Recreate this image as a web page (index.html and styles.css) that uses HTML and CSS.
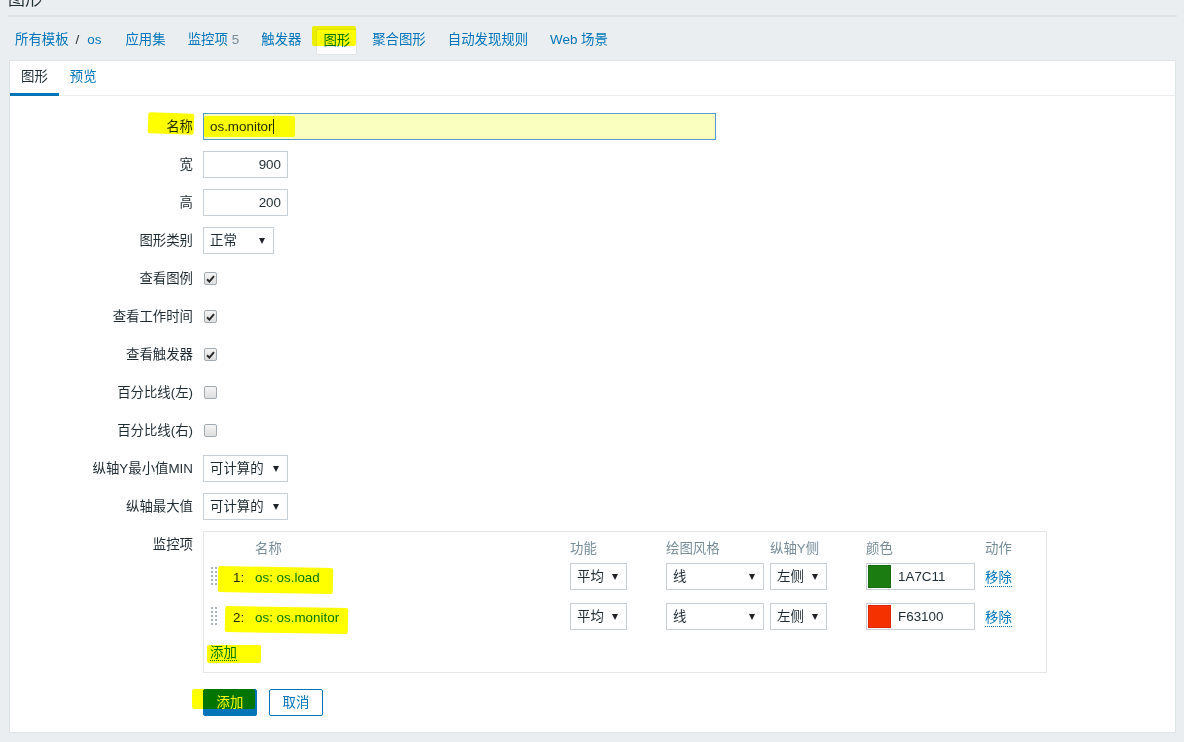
FILE: index.html
```html
<!DOCTYPE html>
<html lang="zh-CN">
<head>
<meta charset="utf-8">
<title>图形</title>
<link rel="stylesheet" href="styles.css">
</head>
<body>
<div class="page">
  <header class="header"><h1 class="title">图形</h1></header>
  <nav class="nav">
    <ul class="nav-list">
      <li class="nav-item"><a class="link">所有模板</a><span class="sep">/</span><a class="link">os</a></li>
      <li class="nav-item"><a class="link">应用集</a></li>
      <li class="nav-item"><a class="link">监控项</a><span class="count">5</span></li>
      <li class="nav-item"><a class="link">触发器</a></li>
      <li class="nav-item active"><span class="link">图形</span></li>
      <li class="nav-item"><a class="link">聚合图形</a></li>
      <li class="nav-item"><a class="link">自动发现规则</a></li>
      <li class="nav-item"><a class="link">Web 场景</a></li>
    </ul>
  </nav>
  <main class="panel">
    <ul class="tabs">
      <li class="tab active">图形</li>
      <li class="tab">预览</li>
    </ul>
    <div class="form">
      <div class="label">名称</div>
      <div class="field"><div class="input input-name">os.monitor<span class="caret"></span></div></div>

      <div class="label">宽</div>
      <div class="field"><div class="input input-num">900</div></div>

      <div class="label">高</div>
      <div class="field"><div class="input input-num">200</div></div>

      <div class="label">图形类别</div>
      <div class="field"><div class="select select-type"><span>正常</span><span class="arrow"></span></div></div>

      <div class="label">查看图例</div>
      <div class="field"><span class="check checked"><svg width="9" height="8" viewBox="0 0 9 8"><path d="M1 4.2 L3.4 6.6 L8 1.2" fill="none" stroke="#2b2b2b" stroke-width="2"/></svg></span></div>

      <div class="label">查看工作时间</div>
      <div class="field"><span class="check checked"><svg width="9" height="8" viewBox="0 0 9 8"><path d="M1 4.2 L3.4 6.6 L8 1.2" fill="none" stroke="#2b2b2b" stroke-width="2"/></svg></span></div>

      <div class="label">查看触发器</div>
      <div class="field"><span class="check checked"><svg width="9" height="8" viewBox="0 0 9 8"><path d="M1 4.2 L3.4 6.6 L8 1.2" fill="none" stroke="#2b2b2b" stroke-width="2"/></svg></span></div>

      <div class="label">百分比线(左)</div>
      <div class="field"><span class="check"></span></div>

      <div class="label">百分比线(右)</div>
      <div class="field"><span class="check"></span></div>

      <div class="label">纵轴Y最小值MIN</div>
      <div class="field"><div class="select select-axis"><span>可计算的</span><span class="arrow"></span></div></div>

      <div class="label">纵轴最大值</div>
      <div class="field"><div class="select select-axis"><span>可计算的</span><span class="arrow"></span></div></div>

      <div class="label">监控项</div>
      <div class="field">
        <div class="items">
          <div class="irow ihead">
            <span></span><span></span>
            <span>名称</span><span>功能</span><span>绘图风格</span><span>纵轴Y侧</span><span>颜色</span><span>动作</span>
          </div>
          <div class="irow item first">
            <span class="handle"></span>
            <span class="num">1:</span>
            <a class="link name">os: os.load</a>
            <div class="select select-func"><span>平均</span><span class="arrow"></span></div>
            <div class="select select-style"><span>线</span><span class="arrow"></span></div>
            <div class="select select-func"><span>左侧</span><span class="arrow"></span></div>
            <div class="color-input"><span class="swatch swatch-green"></span>1A7C11</div>
            <a class="link dotted remove">移除</a>
          </div>
          <div class="irow item second">
            <span class="handle"></span>
            <span class="num">2:</span>
            <a class="link name">os: os.monitor</a>
            <div class="select select-func"><span>平均</span><span class="arrow"></span></div>
            <div class="select select-style"><span>线</span><span class="arrow"></span></div>
            <div class="select select-func"><span>左侧</span><span class="arrow"></span></div>
            <div class="color-input"><span class="swatch swatch-red"></span>F63100</div>
            <a class="link dotted remove">移除</a>
          </div>
          <div class="add-row"><a class="link dotted">添加</a></div>
        </div>
      </div>

      <div class="label"></div>
      <div class="field buttons">
        <button class="btn btn-primary">添加</button>
        <button class="btn btn-cancel">取消</button>
      </div>
    </div>
  </main>
  <div class="marks">
    <span class="hl hl-nav"></span>
    <span class="hl hl-label"></span>
    <span class="hl hl-value"></span>
    <span class="hl hl-row1"></span>
    <span class="hl hl-row2"></span>
    <span class="hl hl-add"></span>
    <span class="hl hl-btn"></span>
  </div>
</div>
</body>
</html>
```

FILE: styles.css
```css
* { box-sizing: border-box; }
html, body { margin: 0; padding: 0; }
body {
  width: 1184px;
  height: 742px;
  overflow: hidden;
  background: #ebeef0;
  font-family: "Liberation Sans", Arial, "Noto Sans CJK SC", sans-serif;
  font-size: 13.4px;
  line-height: 16px;
  color: #1f2c33;
}
.page {
  position: relative;
  padding: 0 7px 0 8px;
}
.header {
  display: flow-root;
  height: 17px;
  border-bottom: 2px solid #dfe4e7;
}
.title {
  margin: -10px 0 0 0;
  font-size: 17px;
  font-weight: normal;
  line-height: 20px;
  color: #1f2c33;
}
.nav {
  height: 43px;
  padding-top: 2px;
  display: flex;
  align-items: center;
}
.nav-list {
  margin: 0;
  padding: 0 0 0 7px;
  list-style: none;
  display: flex;
  align-items: center;
  gap: 22px;
}
.nav-item { line-height: 16px; white-space: nowrap; }
.nav-item:nth-child(2) { margin-left: 2px; }
.link { color: #0275b8; text-decoration: none; }
.sep { margin: 0 8px 0 7px; color: #1f2c33; }
.count { margin-left: 4px; color: #768d99; }
.nav-item.active {
  background: #fff;
  border: 1px solid #dfe4e7;
  border-radius: 2px;
  padding: 3px 6px 5px;
  margin: 4px -7px 0;
}
.panel {
  margin: 0 1px;
  background: #fff;
  border: 1px solid #dfe4e7;
  padding-bottom: 16px;
}
.tabs {
  display: flex;
  margin: 0;
  padding: 0;
  list-style: none;
  height: 35px;
  border-bottom: 1px solid #ebeef0;
}
.tab {
  height: 35px;
  padding: 0 11px;
  line-height: 32px;
  border-bottom: 3px solid transparent;
  color: #0275b8;
}
.tab.active { color: #1f2c33; border-bottom-color: #0275b8; }
.form {
  display: grid;
  grid-template-columns: 183px 1fr;
  column-gap: 10px;
  row-gap: 11px;
  padding-top: 17px;
}
.label {
  text-align: right;
  line-height: 27px;
  white-space: nowrap;
}
.field {
  display: flex;
  align-items: center;
  min-height: 27px;
}
.input {
  height: 27px;
  border: 1px solid #c8d0d5;
  background: #fff;
  padding: 0 6px;
  line-height: 25px;
  white-space: nowrap;
}
.input-name {
  width: 513px;
  background: #fafebe;
  border-color: #5a9acb;
  display: flex;
  align-items: center;
}
.caret {
  display: inline-block;
  width: 1px;
  height: 15px;
  background: #1f2c33;
}
.input-num { width: 85px; text-align: right; }
.select {
  height: 27px;
  border: 1px solid #c8d0d5;
  background: #fff;
  display: flex;
  align-items: center;
  justify-content: space-between;
  padding: 0 8px 0 6px;
  white-space: nowrap;
  line-height: 25px;
}
.arrow {
  width: 0;
  height: 0;
  border-left: 3.5px solid transparent;
  border-right: 3.5px solid transparent;
  border-top: 6px solid #1f2328;
}
.select-type { width: 71px; }
.select-axis { width: 85px; }
.select-func { width: 57px; }
.select-style { width: 98px; }
.check {
  width: 13px;
  height: 13px;
  margin-left: 1px;
  border: 1px solid #a4abb0;
  border-radius: 2px;
  background: linear-gradient(#f4f4f4, #dedede);
  display: flex;
  align-items: center;
  justify-content: center;
}
.check svg { display: block; }
.items {
  width: 844px;
  border: 1px solid #e3e7ea;
  padding: 8px 0 10px 0;
  align-self: flex-start;
}
.irow {
  display: grid;
  grid-template-columns: 25px 26px 315px 96px 104px 96px 119px 1fr;
  align-items: center;
  white-space: nowrap;
}
.ihead { line-height: 18px; color: #768d99; margin-bottom: 5px; }
.item { height: 27px; line-height: 25px; }
.item.first { margin-bottom: 13px; }
.item.second { margin-bottom: 14px; }
.item .num, .item .name { padding-top: 2px; }
.item .remove { margin-top: 2px; }
.handle {
  width: 6px;
  height: 20px;
  margin-left: 7px;
  background-image: radial-gradient(circle at 1px 1px, #a9b6be 0.9px, transparent 1.3px);
  background-size: 4px 4px;
}
.num { padding-left: 4px; }
.color-input {
  width: 109px;
  height: 27px;
  border: 1px solid #c8d0d5;
  display: flex;
  align-items: center;
  padding-left: 1px;
}
.swatch {
  width: 23px;
  height: 23px;
  margin-right: 7px;
  border: 1px solid rgba(0, 0, 0, 0.12);
}
.swatch-green { background: #1a7c11; }
.swatch-red { background: #f63100; }
.dotted { border-bottom: 1px dotted #0275b8; justify-self: start; line-height: 17px; }
.add-row { line-height: 18px; padding-left: 6px; }
.buttons { gap: 12px; margin-top: 5px; }
.btn {
  width: 54px;
  height: 27px;
  border-radius: 2px;
  font-family: inherit;
  font-size: 13.4px;
  line-height: 16px;
  padding: 0;
  cursor: pointer;
}
.btn-primary { background: #0275b8; border: 1px solid #0275b8; color: #fff; }
.btn-cancel { background: #fff; border: 1px solid #0275b8; color: #0275b8; }
.marks { pointer-events: none; }
.hl {
  position: absolute;
  background: #ffff00;
  mix-blend-mode: multiply;
  border-radius: 2px;
}
.hl-nav { left: 312px; top: 26px; width: 44px; height: 20px; }
.hl-label { left: 148px; top: 113px; width: 46px; height: 21px; transform: rotate(2deg); }
.hl-value { left: 204px; top: 116px; width: 91px; height: 21px; }
.hl-row1 { left: 218px; top: 567px; width: 115px; height: 26px; transform: rotate(1deg); }
.hl-row2 { left: 225px; top: 607px; width: 123px; height: 26px; transform: rotate(1deg); }
.hl-add { left: 207px; top: 645px; width: 54px; height: 18px; }
.hl-btn { left: 192px; top: 689px; width: 63px; height: 20px; }
```
